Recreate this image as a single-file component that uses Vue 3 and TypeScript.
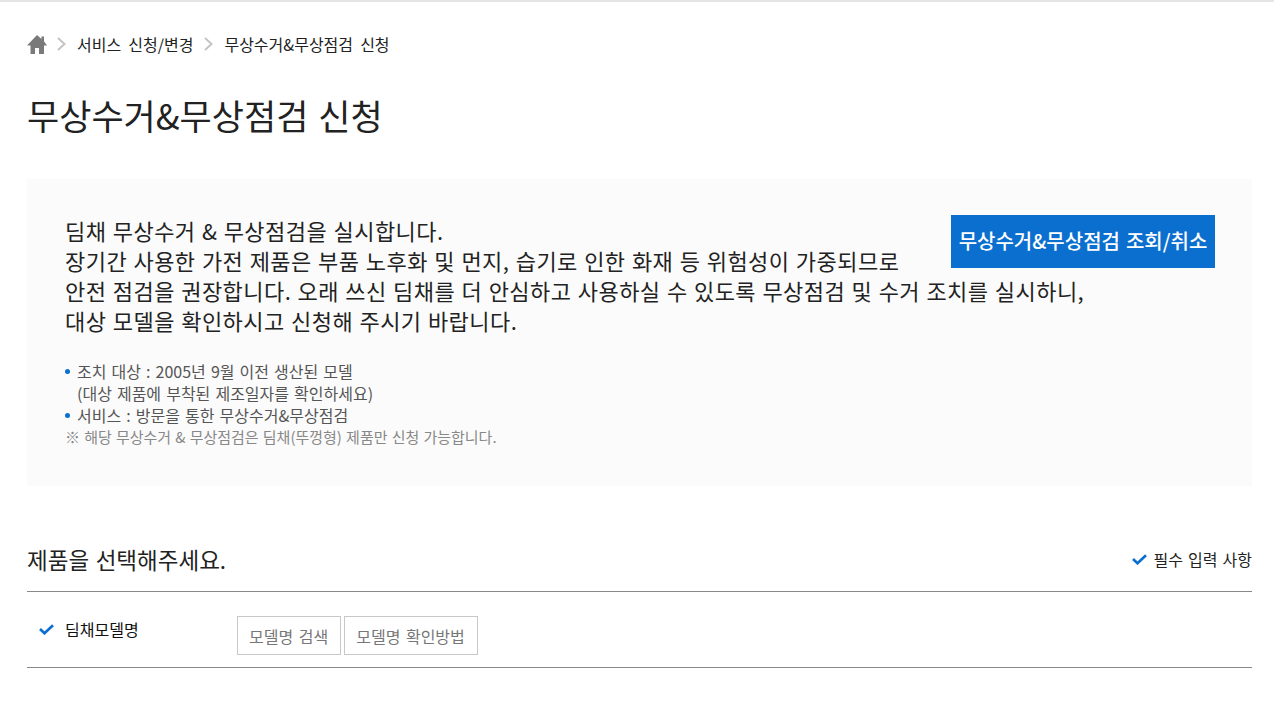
<template>
  <div class="page">
    <nav class="crumbs">
      <svg class="home" viewBox="0 0 20 19" width="20" height="19">
        <path d="M10 0 L14.5 4 L14.5 1.5 L17 1.5 L17 6.2 L20 10.5 L17 10.5 L17 19 L12 19 L12 13 L8 13 L8 19 L3.5 19 L3.5 10.5 L0 10.5 Z" fill="#7a7a7a" />
      </svg>
      <template v-for="item in crumbs" :key="item">
        <svg class="chev" viewBox="0 0 9 14" width="9" height="14">
          <path d="M1 1 L7.5 7 L1 13" fill="none" stroke="#c4c4c4" stroke-width="2" />
        </svg>
        <span class="crumb">{{ item }}</span>
      </template>
    </nav>

    <h1 class="title">무상수거&amp;무상점검 신청</h1>

    <section class="panel">
      <a class="lookup">무상수거&amp;무상점검 조회/취소</a>
      <p class="lead">
        딤채 무상수거 &amp; 무상점검을 실시합니다.<br />
        장기간 사용한 가전 제품은 부품 노후화 및 먼지, 습기로 인한 화재 등 위험성이 가중되므로<br />
        안전 점검을 권장합니다. 오래 쓰신 딤채를 더 안심하고 사용하실 수 있도록 무상점검 및 수거 조치를 실시하니,<br />
        대상 모델을 확인하시고 신청해 주시기 바랍니다.
      </p>
      <ul class="notes">
        <li>조치 대상 : 2005년 9월 이전 생산된 모델<br />(대상 제품에 부착된 제조일자를 확인하세요)</li>
        <li>서비스 : 방문을 통한 무상수거&amp;무상점검</li>
      </ul>
      <p class="caution">※ 해당 무상수거 &amp; 무상점검은 딤채(뚜껑형) 제품만 신청 가능합니다.</p>
    </section>

    <div class="form-head">
      <h2 class="form-title">제품을 선택해주세요.</h2>
      <span class="required">
        <svg class="check" viewBox="0 0 15 11" width="15" height="11">
          <path d="M1 5 L5.5 9.3 L14 1.2" fill="none" stroke="#0b6fcf" stroke-width="2.6" />
        </svg>
        필수 입력 사항
      </span>
    </div>

    <div class="form-row">
      <div class="label">
        <svg class="check" viewBox="0 0 15 11" width="15" height="11">
          <path d="M1 5 L5.5 9.3 L14 1.2" fill="none" stroke="#0b6fcf" stroke-width="2.6" />
        </svg>
        딤채모델명
      </div>
      <div class="actions">
        <button v-for="b in buttons" :key="b" class="ghost" type="button">{{ b }}</button>
      </div>
    </div>
  </div>
</template>

<script setup lang="ts">
const crumbs: string[] = ['서비스 신청/변경', '무상수거&무상점검 신청']
const buttons: string[] = ['모델명 검색', '모델명 확인방법']
</script>

<style>
html,
body {
  margin: 0;
  background: #fff;
}
</style>

<style scoped>
.page {
  box-sizing: border-box;
  height: 706px;
  overflow: hidden;
  padding: 0 22px 0 27px;
  border-top: 2px solid #e5e5e5;
  font-family: "Noto Sans CJK KR", "Noto Sans", sans-serif;
  color: #222;
}
.crumbs {
  display: flex;
  align-items: center;
  height: 24px;
  margin-top: 30px;
  font-size: 16px;
  word-spacing: 3.5px;
}
.home {
  margin-right: 10px;
}
.chev {
  margin-right: 11px;
}
.crumb {
  margin-right: 11px;
  color: #222;
}
.title {
  margin: 34px 0 0;
  font-size: 35px;
  font-weight: 400;
  line-height: 50px;
  word-spacing: 2px;
  color: #222;
}
.panel {
  box-sizing: border-box;
  height: 307px;
  margin-top: 39px;
  padding: 36px 37px 0 38px;
  background: #fbfbfb;
}
.lookup {
  float: right;
  width: 264px;
  height: 53px;
  line-height: 52px;
  text-align: center;
  background: #0b6fcf;
  color: #fff;
  font-size: 20px;
  font-weight: 500;
  word-spacing: 1.5px;
}
.lead {
  margin: 0;
  font-size: 22px;
  line-height: 30px;
  letter-spacing: 0.45px;
  word-spacing: 1px;
  color: #222;
}
.notes {
  list-style: none;
  margin: 25px 0 0;
  padding: 0;
  font-size: 16px;
  line-height: 22px;
  word-spacing: 1.5px;
  color: #555;
}
.notes li {
  position: relative;
  padding-left: 12px;
}
.notes li::before {
  content: "";
  position: absolute;
  left: 0;
  top: 9px;
  width: 5px;
  height: 5px;
  border-radius: 50%;
  background: #0b6fcf;
}
.caution {
  margin: 0;
  font-size: 15px;
  line-height: 22px;
  word-spacing: 0.8px;
  color: #888;
}
.form-head {
  display: flex;
  align-items: center;
  justify-content: space-between;
  height: 40px;
  margin-top: 53px;
  padding-bottom: 12px;
  border-bottom: 1px solid #888;
}
.form-title {
  margin: 0;
  font-size: 22.5px;
  font-weight: 400;
  word-spacing: 1.5px;
  color: #222;
}
.required {
  display: flex;
  align-items: center;
  gap: 7px;
  font-size: 16px;
  word-spacing: 1.5px;
  color: #222;
}
.form-row {
  display: flex;
  height: 75px;
  border-bottom: 1px solid #888;
}
.label {
  display: flex;
  align-items: center;
  gap: 11px;
  width: 210px;
  height: 24px;
  margin-top: 25px;
  padding-left: 12px;
  box-sizing: border-box;
  font-size: 16px;
  color: #111;
}
.actions {
  display: flex;
  gap: 3px;
  margin-top: 24px;
}
.ghost {
  height: 39px;
  padding: 0 12px 0 11px;
  border: 1px solid #c8c8c8;
  background: #fff;
  font: inherit;
  font-size: 16px;
  word-spacing: 2px;
  color: #777;
}
</style>
